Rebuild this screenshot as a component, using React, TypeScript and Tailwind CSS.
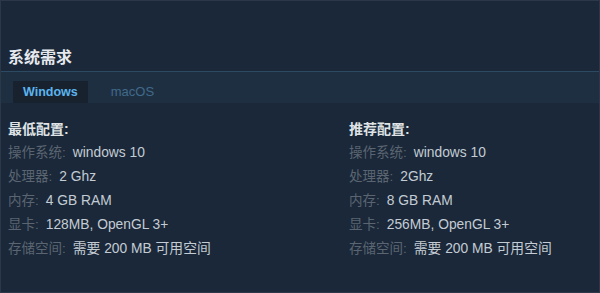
import React from 'react'

type Spec = { label: string; value: string }

const minSpecs: Spec[] = [
  { label: '操作系统:', value: 'windows 10' },
  { label: '处理器:', value: '2 Ghz' },
  { label: '内存:', value: '4 GB RAM' },
  { label: '显卡:', value: '128MB, OpenGL 3+' },
  { label: '存储空间:', value: '需要 200 MB 可用空间' },
]

const recSpecs: Spec[] = [
  { label: '操作系统:', value: 'windows 10' },
  { label: '处理器:', value: '2Ghz' },
  { label: '内存:', value: '8 GB RAM' },
  { label: '显卡:', value: '256MB, OpenGL 3+' },
  { label: '存储空间:', value: '需要 200 MB 可用空间' },
]

const SpecColumn = ({ title, specs }: { title: string; specs: Spec[] }) => (
  <div className="flex flex-col">
    <div className="h-[23px] text-[14px] font-bold leading-[23px] text-[#dfe3e6]">{title}</div>
    {specs.map((s) => (
      <div key={s.label} className="flex h-[24px] items-center leading-[24px]">
        <span className="text-[13.5px] text-[#5a6571]">{s.label}</span>
        <span className="ml-[7px] text-[13.8px] text-[#c3ccd4]">{s.value}</span>
      </div>
    ))}
  </div>
)

export default function App() {
  return (
    <div
      className="h-[293px] w-[600px] overflow-hidden border border-[#2c3849] bg-[#1b2839]"
      style={{ fontFamily: '"Liberation Sans", Arial, "Noto Sans CJK SC", sans-serif' }}
    >
      {/* title */}
      <div className="pl-[7px] pt-[47px] text-[16px] font-bold leading-[20px] text-[#e6eaee]">系统需求</div>

      {/* platform tabs */}
      <div className="mt-[3px] h-[32px] border-t border-[#2d4a63] bg-[#1f2f42] pl-[12px] pt-[9px]">
        <div className="flex h-[22px] items-center">
          <div className="flex h-full items-center bg-[#18222e] px-[10px] text-[12.5px] font-bold text-[#5bb4ee]">Windows</div>
          <div className="ml-[23px] text-[13px] text-[#3f6a8a]">macOS</div>
        </div>
      </div>

      {/* requirements */}
      <div className="grid grid-cols-[341px_1fr] pl-[7px] pt-[15px]">
        <SpecColumn title="最低配置:" specs={minSpecs} />
        <SpecColumn title="推荐配置:" specs={recSpecs} />
      </div>
    </div>
  )
}
